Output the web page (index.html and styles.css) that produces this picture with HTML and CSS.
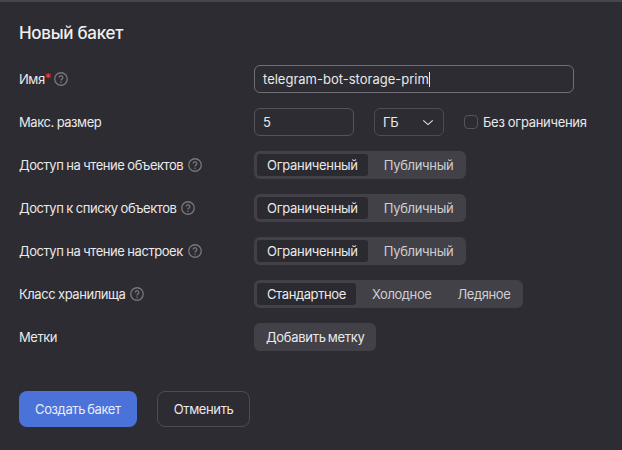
FILE: index.html
```html
<!DOCTYPE html>
<html lang="ru">
<head>
<meta charset="utf-8">
<title>Новый бакет</title>
<link rel="stylesheet" href="styles.css">
</head>
<body>
<main class="panel">
  <h1 class="title">Новый бакет</h1>
  <form class="form">
    <div class="row">
      <div class="label">Имя<span class="req">*</span><svg class="help" viewBox="0 0 14 14"><circle cx="7" cy="7" r="6.25"/><path d="M5.2 5.5a1.8 1.8 0 1 1 2.7 1.6c-.6.35-.9.7-.9 1.3"/><circle class="dot" cx="7" cy="10.2" r=".8"/></svg></div>
      <div class="input input-name"><span class="latin">telegram-bot-storage-prim</span><i class="caret"></i></div>
    </div>
    <div class="row">
      <div class="label">Макс. размер</div>
      <div class="controls">
        <div class="input input-size">5</div>
        <div class="select">ГБ<svg class="chev" viewBox="0 0 14 8"><path d="M1.5 1.5 7 6.5l5.5-5"/></svg></div>
        <label class="check"><span class="box"></span>Без ограничения</label>
      </div>
    </div>
    <div class="row">
      <div class="label">Доступ на чтение объектов<svg class="help" viewBox="0 0 14 14"><circle cx="7" cy="7" r="6.25"/><path d="M5.2 5.5a1.8 1.8 0 1 1 2.7 1.6c-.6.35-.9.7-.9 1.3"/><circle class="dot" cx="7" cy="10.2" r=".8"/></svg></div>
      <div class="seg"><span class="opt on">Ограниченный</span><span class="opt">Публичный</span></div>
    </div>
    <div class="row">
      <div class="label">Доступ к списку объектов<svg class="help" viewBox="0 0 14 14"><circle cx="7" cy="7" r="6.25"/><path d="M5.2 5.5a1.8 1.8 0 1 1 2.7 1.6c-.6.35-.9.7-.9 1.3"/><circle class="dot" cx="7" cy="10.2" r=".8"/></svg></div>
      <div class="seg"><span class="opt on">Ограниченный</span><span class="opt">Публичный</span></div>
    </div>
    <div class="row">
      <div class="label">Доступ на чтение настроек<svg class="help" viewBox="0 0 14 14"><circle cx="7" cy="7" r="6.25"/><path d="M5.2 5.5a1.8 1.8 0 1 1 2.7 1.6c-.6.35-.9.7-.9 1.3"/><circle class="dot" cx="7" cy="10.2" r=".8"/></svg></div>
      <div class="seg"><span class="opt on">Ограниченный</span><span class="opt">Публичный</span></div>
    </div>
    <div class="row">
      <div class="label">Класс хранилища<svg class="help" viewBox="0 0 14 14"><circle cx="7" cy="7" r="6.25"/><path d="M5.2 5.5a1.8 1.8 0 1 1 2.7 1.6c-.6.35-.9.7-.9 1.3"/><circle class="dot" cx="7" cy="10.2" r=".8"/></svg></div>
      <div class="seg seg-tight"><span class="opt on">Стандартное</span><span class="opt">Холодное</span><span class="opt">Ледяное</span></div>
    </div>
    <div class="row">
      <div class="label">Метки</div>
      <div class="btn-tag">Добавить метку</div>
    </div>
  </form>
  <div class="actions">
    <div class="btn btn-primary">Создать бакет</div>
    <div class="btn btn-outline">Отменить</div>
  </div>
</main>
</body>
</html>
```
FILE: styles.css
```css
* { box-sizing: border-box; }
html, body { margin: 0; height: 100%; }
body {
  background: #2d2c33;
  color: #e9e9ea;
  font-family: Inter, "Noto Sans", sans-serif;
  font-size: 13px;
  line-height: 18px;
  letter-spacing: -0.37px;
  word-spacing: -1.2px;
  overflow: hidden;
}
.panel {
  height: 450px;
  border-top: 2px solid #47464d;
  padding: 20px 19px 0;
}
.title {
  margin: 0 0 21px;
  font-size: 17px;
  line-height: 22px;
  font-weight: 500;
  letter-spacing: -0.3px;
  word-spacing: 0;
  color: #f0f0f1;
}
.form { display: flex; flex-direction: column; gap: 15px; }
.row { display: flex; align-items: center; height: 28px; }
.label { width: 235px; display: flex; align-items: center; letter-spacing: -0.45px; word-spacing: -0.3px; }
.req { color: #e5484d; align-self: flex-start; line-height: 16px; margin-right: -2px; }
.help { width: 14px; height: 14px; margin-left: 5px; fill: none; stroke: #77767c; stroke-width: 1.3; }
.help .dot { fill: #77767c; stroke: none; }
.input {
  height: 28px;
  border: 1px solid #55545b;
  border-radius: 6px;
  padding: 0 8px;
  display: flex;
  align-items: center;
}
.latin { letter-spacing: 0; }
.input-name { width: 320px; border-color: #706f75; }
.caret { width: 1px; height: 15px; background: #eee; }
.input-size { width: 100px; }
.controls { display: flex; align-items: center; }
.select {
  width: 70px;
  height: 28px;
  margin-left: 20px;
  border: 1px solid #4d4c53;
  border-radius: 6px;
  padding: 0 8px;
  display: flex;
  align-items: center;
  justify-content: space-between;
}
.chev { width: 12px; height: 7px; fill: none; stroke: #e6e6e7; stroke-width: 1.2; margin-right: 1px; }
.check { display: flex; align-items: center; margin-left: 20px; word-spacing: 0; letter-spacing: -0.3px; }
.box { width: 14px; height: 14px; border: 1px solid #55545b; border-radius: 4px; margin-right: 5px; }
.seg {
  display: flex;
  gap: 6px;
  height: 28px;
  padding: 3px;
  background: #424148;
  border-radius: 6px;
}
.opt { padding: 0 10px; line-height: 22px; border-radius: 3px; color: #cfcfd1; letter-spacing: -0.3px; }
.seg-tight .opt { letter-spacing: -0.4px; }
.opt.on { background: #2b2a30; color: #e9e9ea; }
.btn-tag {
  height: 28px;
  padding: 0 12px;
  background: #424148;
  border-radius: 6px;
  line-height: 28px;
  letter-spacing: -0.3px;
}
.actions { display: flex; gap: 20px; margin-top: 40px; }
.btn {
  height: 36px;
  padding: 0 16px;
  border-radius: 8px;
  display: flex;
  align-items: center;
}
.btn-primary { background: #4b72d9; color: #e8edf9; }
.btn-outline { border: 1px solid #4d4c53; }
```
